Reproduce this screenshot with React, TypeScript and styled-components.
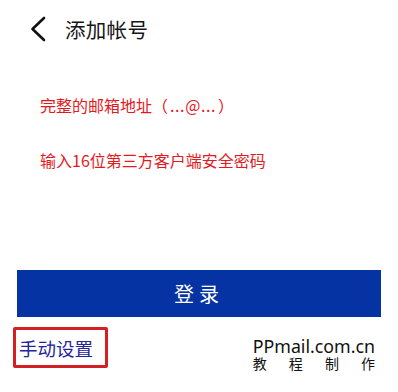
import styled, { createGlobalStyle } from "styled-components";

const GlobalStyle = createGlobalStyle`
  html, body {
    margin: 0;
    padding: 0;
    background: #ffffff;
  }
  body {
    font-family: "Noto Sans CJK SC", "Noto Sans", sans-serif;
  }
`;

const App = () => {
  return (
    <Page>
      <GlobalStyle />
      <Header>
        <Back aria-label="back">
          <svg width="18" height="26" viewBox="0 0 18 26">
            <path d="M15 2 L3.5 13 L15 24" fill="none" stroke="#111" strokeWidth="2.6" strokeLinecap="round" strokeLinejoin="round" />
          </svg>
        </Back>
        <Title>添加帐号</Title>
      </Header>

      <Fields>
        <Field>
          <Hint>完整的邮箱地址（<Dots>...@...</Dots>）</Hint>
        </Field>
        <Field>
          <Hint>输入16位第三方客户端安全密码</Hint>
        </Field>
      </Fields>

      <LoginButton>登录</LoginButton>

      <Footer>
        <ManualLink>手动设置</ManualLink>
        <Credit>
          <Site>PPmail.com.cn</Site>
          <Spread>
            <span>教</span>
            <span>程</span>
            <span>制</span>
            <span>作</span>
          </Spread>
        </Credit>
      </Footer>
    </Page>
  );
};

export default App;

const Page = styled.div`
  width: 398px;
  height: 392px;
  box-sizing: border-box;
  display: flex;
  flex-direction: column;
  overflow: hidden;
`;

const Header = styled.div`
  height: 58px;
  display: flex;
  align-items: center;
  padding-left: 29px;
`;

const Back = styled.div`
  width: 18px;
  height: 26px;
  display: flex;
  margin-right: 18px;
`;

const Title = styled.div`
  font-size: 20.5px;
  color: #141414;
  letter-spacing: 0.3px;
  margin-top: -1px;
`;

const Fields = styled.div`
  display: flex;
  flex-direction: column;
  padding-left: 40px;
  margin-top: 35px;
  gap: 32px;
`;

const Field = styled.div`
  height: 23px;
  display: flex;
  align-items: center;
`;

const Hint = styled.span`
  font-size: 16px;
  color: #e5181d;
`;

const Dots = styled.span`
  letter-spacing: 0.6px;
  padding: 0 2px;
`;

const LoginButton = styled.div`
  margin: 99px 17px 0 17px;
  height: 47px;
  background: #0633a4;
  color: #ffffff;
  font-size: 20px;
  letter-spacing: 5px;
  display: flex;
  align-items: center;
  justify-content: center;
`;

const Footer = styled.div`
  display: flex;
  justify-content: space-between;
  align-items: flex-start;
  margin-top: 10px;
  padding: 0 23px 0 13px;
`;

const ManualLink = styled.div`
  width: 95px;
  height: 41px;
  box-sizing: border-box;
  border: 3px solid #d41f23;
  border-radius: 2px;
  color: #25259a;
  font-size: 18.5px;
  display: flex;
  align-items: center;
  padding-left: 3px;
`;

const Credit = styled.div`
  display: flex;
  flex-direction: column;
  margin-top: 10px;
  color: #111;
`;

const Site = styled.div`
  font-family: "Noto Sans", sans-serif;
  font-size: 17.8px;
  line-height: 19px;
`;

const Spread = styled.div`
  display: flex;
  justify-content: space-between;
  font-size: 14px;
  line-height: 15px;
`;
